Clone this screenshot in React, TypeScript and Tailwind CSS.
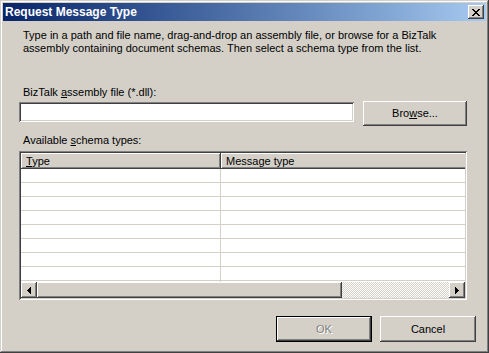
import React from "react";

const raised =
  "shadow-[inset_-1px_-1px_#404040,inset_1px_1px_#ffffff,inset_-2px_-2px_#808080,inset_2px_2px_#d4d0c8]";
const sunken =
  "shadow-[inset_1px_1px_#808080,inset_-1px_-1px_#ffffff,inset_2px_2px_#404040,inset_-2px_-2px_#d4d0c8]";

function ArrowLeft() {
  return (
    <svg width="4" height="7" viewBox="0 0 4 7" className="block">
      <path d="M0 3h1v1H0zM1 2h1v3H1zM2 1h1v5H2zM3 0h1v7H3z" fill="#000" />
    </svg>
  );
}
function ArrowRight() {
  return (
    <svg width="4" height="7" viewBox="0 0 4 7" className="block">
      <path d="M3 3h1v1H3zM2 2h1v3H2zM1 1h1v5H1zM0 0h1v7H0z" fill="#000" />
    </svg>
  );
}

export default function App() {
  const rows = Array.from({ length: 9 });
  return (
    <div
      className={`w-[489px] h-[353px] bg-[#d4d0c8] p-[3px] flex flex-col shadow-[inset_-1px_-1px_#404040,inset_1px_1px_#d4d0c8,inset_-2px_-2px_#808080,inset_2px_2px_#ffffff] overflow-hidden`}
      style={{ fontFamily: '"Liberation Sans", Arial, sans-serif' }}
    >
      {/* Title bar */}
      <div className="h-[18px] flex items-center bg-linear-to-r from-[#0a246a] to-[#a6caf0] pl-[2px] pr-[2px]">
        <span className="text-white font-bold text-[12px] leading-[18px] flex-1">
          Request Message Type
        </span>
        <div className={`w-[16px] h-[14px] bg-[#d4d0c8] ${raised} flex items-center justify-center`}>
          <svg width="8" height="7" viewBox="0 0 8 7" className="block">
            <path
              d="M0 0h2v1H0zM6 0h2v1H6zM1 1h2v1H1zM5 1h2v1H5zM2 2h4v1H2zM3 3h2v1H3zM2 4h4v1H2zM1 5h2v1H1zM5 5h2v1H5zM0 6h2v1H0zM6 6h2v1H6z"
              fill="#000"
            />
          </svg>
        </div>
      </div>

      {/* Body */}
      <div className="flex flex-col pl-[16px] pr-[18px] text-[11px] text-black">
        <p className="mt-[8px] ml-[4px] leading-[13px]">
          Type in a path and file name, drag-and-drop an assembly file, or browse for a BizTalk
          <br />
          assembly containing document schemas. Then select a schema type from the list.
        </p>

        <div className="mt-[31px] ml-[4px] leading-[13px]">
          BizTalk <span className="underline underline-offset-[1px]">a</span>ssembly file (*.dll):
        </div>

        <div className="mt-[2px] flex items-start gap-[9px]">
          <div className={`mt-[1px] w-[335px] h-[20px] bg-white ${sunken}`} />
          <div
            className={`w-[104px] h-[25px] bg-[#d4d0c8] ${raised} flex items-center justify-center leading-[13px]`}
          >
            <span>
              Bro<span className="underline underline-offset-[1px]">w</span>se...
            </span>
          </div>
        </div>

        <div className="mt-[8px] ml-[4px] leading-[13px]">
          Available <span className="underline underline-offset-[1px]">s</span>chema types:
        </div>

        {/* List view */}
        <div className={`mt-[4px] w-[448px] h-[149px] bg-white ${sunken} p-[2px] flex flex-col`}>
          <div className="flex-1 overflow-hidden flex flex-col">
            <div className="flex h-[16px] shrink-0">
              <div
                className={`w-[200px] shrink-0 bg-[#d4d0c8] ${raised} pl-[5px] leading-[16px]`}
              >
                <span className="underline underline-offset-[1px]">T</span>ype
              </div>
              <div
                className={`w-[300px] shrink-0 bg-[#d4d0c8] ${raised} pl-[5px] leading-[16px]`}
              >
                Message type
              </div>
            </div>
            <div className="flex-1 overflow-hidden">
              {rows.map((_, i) => (
                <div key={i} className="flex h-[14px] border-b border-[#d4d0c8]">
                  <div className="w-[200px] shrink-0 border-r border-[#d4d0c8]" />
                  <div className="flex-1" />
                </div>
              ))}
            </div>
          </div>
          {/* Horizontal scrollbar */}
          <div className="h-[16px] flex shrink-0">
            <div className={`w-[16px] h-[16px] bg-[#d4d0c8] ${raised} flex items-center justify-center`}>
              <ArrowLeft />
            </div>
            <div className={`w-[305px] h-[16px] bg-[#d4d0c8] ${raised}`} />
            <div className="flex-1 h-[16px] bg-[repeating-conic-gradient(#d4d0c8_0_25%,#ffffff_0_50%)] bg-[length:2px_2px]" />
            <div className={`w-[16px] h-[16px] bg-[#d4d0c8] ${raised} flex items-center justify-center`}>
              <ArrowRight />
            </div>
          </div>
        </div>

        {/* Buttons */}
        <div className="mt-[16px] flex justify-end gap-[8px] -mr-[8px]">
          <div className="w-[96px] h-[26px] border border-black">
            <div
              className={`w-full h-full bg-[#d4d0c8] ${raised} flex items-center justify-center text-[#808080] [text-shadow:1px_1px_0_#ffffff]`}
            >
              OK
            </div>
          </div>
          <div
            className={`w-[96px] h-[26px] bg-[#d4d0c8] ${raised} flex items-center justify-center`}
          >
            Cancel
          </div>
        </div>
      </div>
    </div>
  );
}
